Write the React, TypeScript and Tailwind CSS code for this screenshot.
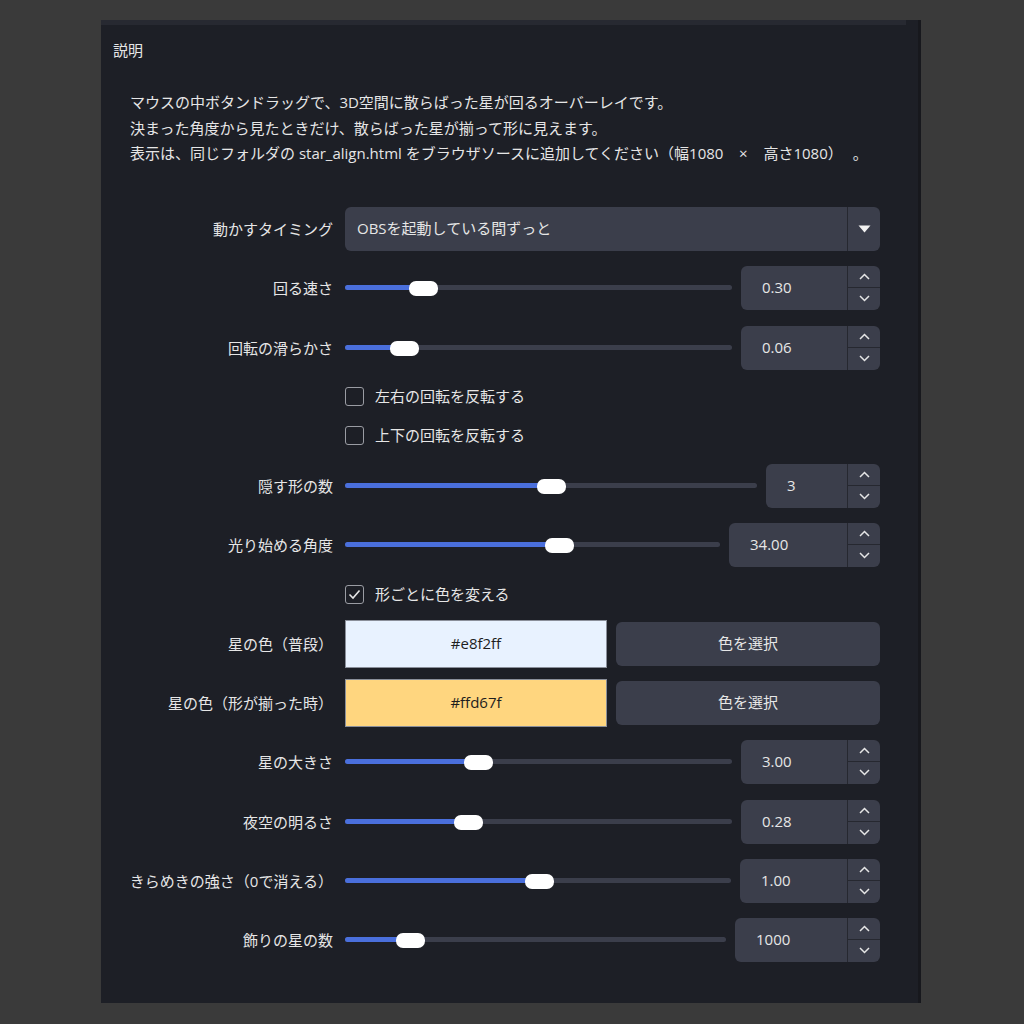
import React from 'react'

// ── Types ─────────────────────────────────────────────────────────────────────

type Row =
  | { kind: 'select'; label: string; value: string; mt: number }
  | { kind: 'slider'; label: string; value: string; thumb: number; spinW: number; mt: number }
  | { kind: 'check'; label: string; checked: boolean; mt: number }
  | { kind: 'color'; label: string; hex: string; mt: number }

const ROWS: Row[] = [
  { kind: 'select', label: '動かすタイミング', value: 'OBSを起動している間ずっと', mt: 0 },
  { kind: 'slider', label: '回る速さ', value: '0.30', thumb: 78, spinW: 139, mt: 15 },
  { kind: 'slider', label: '回転の滑らかさ', value: '0.06', thumb: 59, spinW: 139, mt: 16 },
  { kind: 'check', label: '左右の回転を反転する', checked: false, mt: 15 },
  { kind: 'check', label: '上下の回転を反転する', checked: false, mt: 15 },
  { kind: 'slider', label: '隠す形の数', value: '3', thumb: 206, spinW: 114, mt: 16 },
  { kind: 'slider', label: '光り始める角度', value: '34.00', thumb: 214, spinW: 151, mt: 15 },
  { kind: 'check', label: '形ごとに色を変える', checked: true, mt: 16 },
  { kind: 'color', label: '星の色（普段）', hex: '#e8f2ff', mt: 13 },
  { kind: 'color', label: '星の色（形が揃った時）', hex: '#ffd67f', mt: 11 },
  { kind: 'slider', label: '星の大きさ', value: '3.00', thumb: 133, spinW: 139, mt: 13 },
  { kind: 'slider', label: '夜空の明るさ', value: '0.28', thumb: 123, spinW: 139, mt: 16 },
  { kind: 'slider', label: 'きらめきの強さ（0で消える）', value: '1.00', thumb: 194, spinW: 140, mt: 15 },
  { kind: 'slider', label: '飾りの星の数', value: '1000', thumb: 65, spinW: 145, mt: 15 },
]

// ── Pieces ────────────────────────────────────────────────────────────────────

function Chevron({ up }: { up?: boolean }) {
  return (
    <svg width="11" height="7" viewBox="0 0 11 7" fill="none" stroke="#e6e6e6" strokeWidth="1.5">
      {up ? <polyline points="1,6 5.5,1.5 10,6" /> : <polyline points="1,1 5.5,5.5 10,1" />}
    </svg>
  )
}

function SpinBox({ value, width }: { value: string; width: number }) {
  return (
    <div
      className="flex h-[44px] shrink-0 rounded-[6px] bg-[#3b3e4b] overflow-hidden"
      style={{ width }}
    >
      <div className="flex-1 flex items-center pl-[21px] text-[15px] text-[#e6e6e6]">{value}</div>
      <div className="w-px bg-[#262830]" />
      <div className="w-[32px] flex flex-col">
        <div className="flex-1 flex items-center justify-center"><Chevron up /></div>
        <div className="h-px bg-[#262830]" />
        <div className="flex-1 flex items-center justify-center"><Chevron /></div>
      </div>
    </div>
  )
}

function Slider({ thumb }: { thumb: number }) {
  return (
    <div className="relative flex-1 h-[44px] flex items-center">
      <div className="w-full h-[5px] rounded-full bg-[#3b3e4b] overflow-hidden">
        <div className="h-full bg-[#4a6fdc]" style={{ width: thumb }} />
      </div>
      <div
        className="absolute top-[15px] w-[29px] h-[15px] rounded-[7px] bg-white"
        style={{ left: thumb - 14 }}
      />
    </div>
  )
}

function Checkbox({ checked }: { checked: boolean }) {
  return (
    <div className="w-[19px] h-[19px] rounded-[3px] border border-[#9a9ca3] flex items-center justify-center">
      {checked && (
        <svg width="13" height="11" viewBox="0 0 13 11" fill="none" stroke="#e6e6e6" strokeWidth="1.6">
          <polyline points="1.5,5.5 5,9 11.5,1.5" />
        </svg>
      )}
    </div>
  )
}

function Control({ row }: { row: Row }) {
  switch (row.kind) {
    case 'select':
      return (
        <div className="flex h-[44px] rounded-[6px] bg-[#3b3e4b] overflow-hidden">
          <div className="flex-1 flex items-center pl-[12px] text-[15px] text-[#e6e6e6]">{row.value}</div>
          <div className="w-px bg-[#262830]" />
          <div className="w-[32px] flex items-center justify-center">
            <svg width="13" height="8" viewBox="0 0 13 8"><polygon points="0.5,0.5 12.5,0.5 6.5,7.5" fill="#f2f2f2" /></svg>
          </div>
        </div>
      )
    case 'slider':
      return (
        <div className="flex items-center gap-[9px]">
          <Slider thumb={row.thumb} />
          <SpinBox value={row.value} width={row.spinW} />
        </div>
      )
    case 'check':
      return (
        <div className="flex items-center gap-[11px] h-[24px]">
          <Checkbox checked={row.checked} />
          <span className="text-[15px] text-[#e6e6e6]">{row.label}</span>
        </div>
      )
    case 'color':
      return (
        <div className="flex items-center gap-[9px] h-[48px]">
          <div
            className="w-[262px] h-[48px] border border-[#8a8f9a] flex items-center justify-center text-[15px] text-[#1e1e1e]"
            style={{ backgroundColor: row.hex }}
          >
            {row.hex}
          </div>
          <div className="flex-1 h-[44px] rounded-[6px] bg-[#3b3e4b] flex items-center justify-center text-[15px] text-[#e6e6e6]">
            色を選択
          </div>
        </div>
      )
  }
}

// ── Page ──────────────────────────────────────────────────────────────────────

export default function App() {
  return (
    <div
      className="w-[1024px] h-[1024px] bg-[#3a3a3a] pt-[20px] pl-[101px] [text-spacing-trim:space-all]"
      style={{ fontFamily: '"Open Sans", "Noto Sans CJK JP", sans-serif' }}
    >
      <div className="w-[820px] h-[983px] bg-[#1d1f26] border-r-[3px] border-[#17181d] flex flex-col">
        {/* top strip */}
        <div className="h-[5px] w-[805px] bg-[#272931]" />

        {/* header */}
        <p className="mt-[13px] pl-[12px] text-[15px] leading-[24px] text-[#e6e6e6]">説明</p>

        {/* description */}
        <div className="mt-[28px] pl-[29px] text-[15px] leading-[25.5px] text-[#e6e6e6] whitespace-nowrap">
          <p>マウスの中ボタンドラッグで、3D空間に散らばった星が回るオーバーレイです。</p>
          <p>決まった角度から見たときだけ、散らばった星が揃って形に見えます。</p>
          <p>
            表示は、同じフォルダの star_align.html をブラウザソースに追加してください（幅1080
            <span className="inline-block w-[40px] text-center">×</span>
            高さ1080）<span className="ml-[10px]">。</span>
          </p>
        </div>

        {/* form */}
        <div className="mt-[40px] flex flex-col">
          {ROWS.map((row, i) => (
            <div
              key={i}
              className="grid grid-cols-[232px_535px] gap-x-[12px] items-center"
              style={{ marginTop: row.mt }}
            >
              <div className="text-right text-[15px] text-[#e6e6e6] leading-[20px]">
                {row.kind === 'check' ? '' : row.label}
              </div>
              <Control row={row} />
            </div>
          ))}
        </div>
      </div>
    </div>
  )
}
